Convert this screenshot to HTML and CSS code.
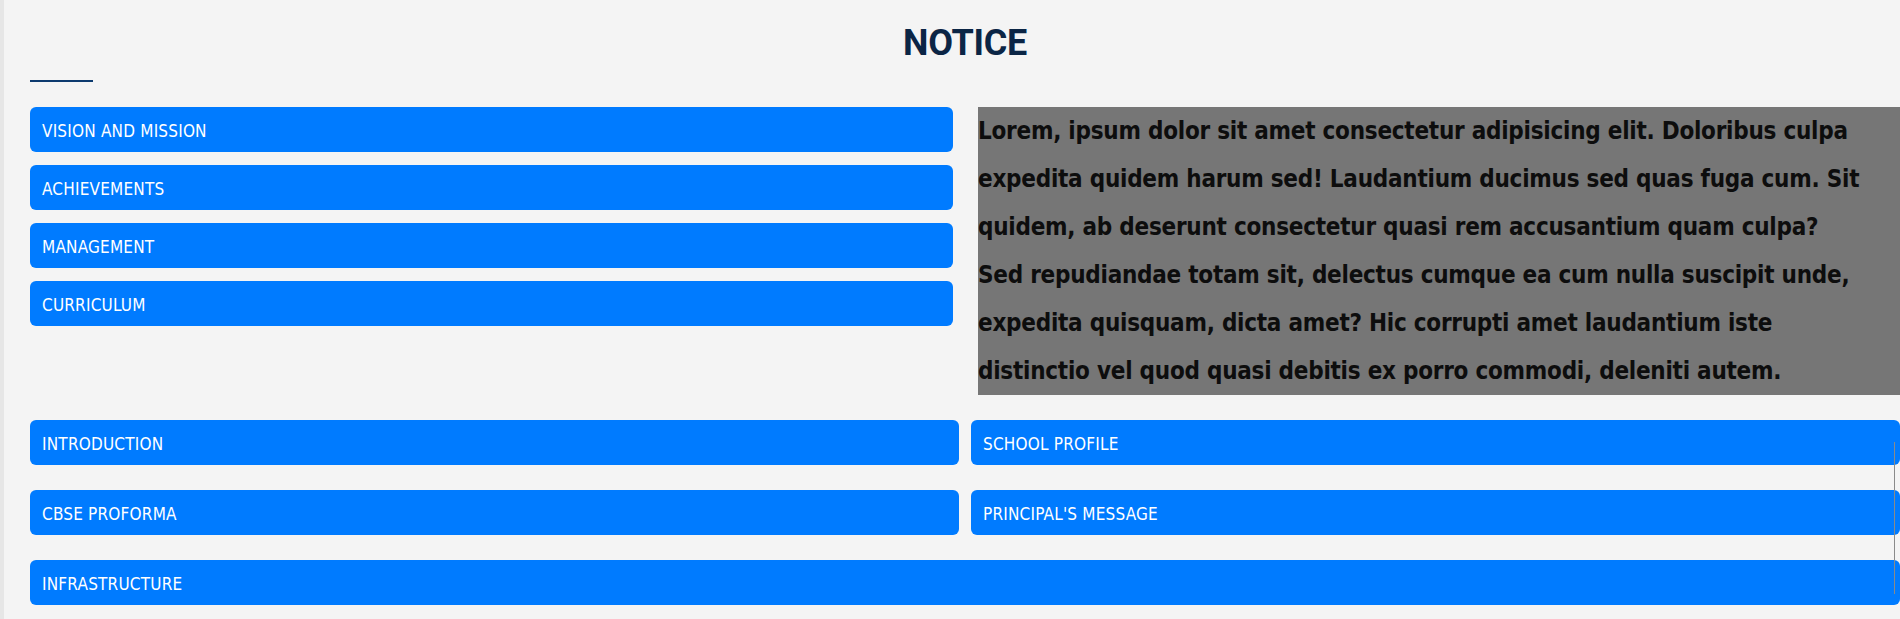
FILE: index.html
```html
<!DOCTYPE html>
<html lang="en">
<head>
<meta charset="utf-8">
<title>Notice</title>
<link rel="stylesheet" href="styles.css">
</head>
<body>
<div class="page">
  <main class="section">
    <h2 class="title">NOTICE</h2>
    <div class="rule"></div>
    <div class="top-grid">
      <div class="stack">
        <a class="btn" href="#">VISION AND MISSION</a>
        <a class="btn" href="#">ACHIEVEMENTS</a>
        <a class="btn" href="#">MANAGEMENT</a>
        <a class="btn" href="#">CURRICULUM</a>
      </div>
      <div class="notice">
        <p>Lorem, ipsum dolor sit amet consectetur adipisicing elit. Doloribus culpa<br>expedita quidem harum sed! Laudantium ducimus sed quas fuga cum. Sit<br>quidem, ab deserunt consectetur quasi rem accusantium quam culpa?<br>Sed repudiandae totam sit, delectus cumque ea cum nulla suscipit unde,<br>expedita quisquam, dicta amet? Hic corrupti amet laudantium iste<br>distinctio vel quod quasi debitis ex porro commodi, deleniti autem.</p>
      </div>
    </div>
    <div class="links">
      <a class="btn" href="#">INTRODUCTION</a>
      <a class="btn" href="#">SCHOOL PROFILE</a>
      <a class="btn" href="#">CBSE PROFORMA</a>
      <a class="btn" href="#">PRINCIPAL'S MESSAGE</a>
      <a class="btn wide" href="#">INFRASTRUCTURE</a>
    </div>
    <div class="scroll-line"></div>
  </main>
</div>
</body>
</html>
```

FILE: styles.css
```css
html, body {
  margin: 0;
  padding: 0;
  background: #f4f4f4;
  overflow: hidden;
}
.page {
  border-left: 4px solid #e6e6e6;
  min-height: 619px;
  box-sizing: border-box;
}
.section {
  position: relative;
  width: 1870px;
  margin-left: 26px;
  padding-top: 18px;
}
.title {
  margin: 0;
  text-align: center;
  font-family: Roboto, "DejaVu Sans Condensed", sans-serif;
  font-weight: 700;
  font-size: 36px;
  line-height: 50px;
  letter-spacing: -0.3px;
  color: #0b2545;
}
.rule {
  width: 63px;
  height: 2px;
  background: #0c3a6e;
  margin-top: 12px;
}
.top-grid {
  display: grid;
  grid-template-columns: 923px 1fr;
  gap: 25px;
  margin-top: 25px;
  align-items: start;
}
.stack {
  display: flex;
  flex-direction: column;
  gap: 13px;
}
.btn {
  display: flex;
  align-items: center;
  height: 45px;
  box-sizing: border-box;
  padding: 3px 12px 0;
  background: #007bff;
  color: #fff;
  border-radius: 6px;
  text-decoration: none;
  font-family: "DejaVu Sans Condensed", "DejaVu Sans", sans-serif;
  font-size: 17px;
  letter-spacing: 0.2px;
}
.notice {
  background: #767676;
  height: 288px;
}
.notice p {
  margin: 0;
  white-space: nowrap;
  font-family: "DejaVu Sans Condensed", "DejaVu Sans", sans-serif;
  font-weight: 700;
  font-size: 24px;
  letter-spacing: -0.25px;
  line-height: 48px;
  color: #0d0d0d;
}
.links {
  display: grid;
  grid-template-columns: 1fr 1fr;
  column-gap: 12px;
  row-gap: 25px;
  margin-top: 25px;
}
.wide {
  grid-column: 1 / -1;
}
.scroll-line {
  position: absolute;
  left: 1864px;
  top: 442px;
  width: 1px;
  height: 152px;
  background: #8a8a8a;
}
```
